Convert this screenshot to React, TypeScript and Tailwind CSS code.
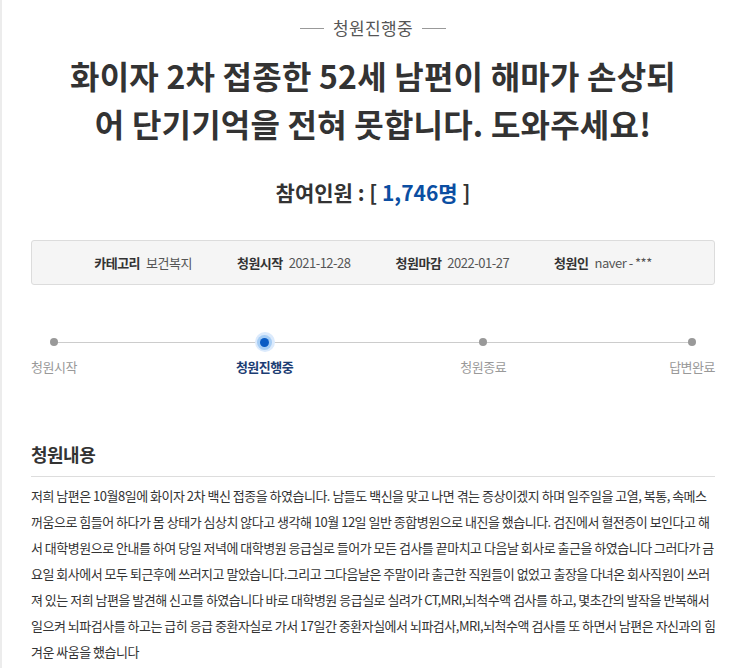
const font = { fontFamily: '"Noto Sans CJK KR", "Noto Sans", sans-serif' }

const bodyLines = [
    '저희 남편은 10월8일에 화이자 2차 백신 접종을 하였습니다. 남들도 백신을 맞고 나면 겪는 증상이겠지 하며 일주일을 고열, 복통, 속메스',
    '꺼움으로 힘들어 하다가 몸 상태가 심상치 않다고 생각해 10월 12일 일반 종합병원으로 내진을 했습니다. 검진에서 혈전증이 보인다고 해',
    '서 대학병원으로 안내를 하여 당일 저녁에 대학병원 응급실로 들어가 모든 검사를 끝마치고 다음날 회사로 출근을 하였습니다 그러다가 금',
    '요일 회사에서 모두 퇴근후에 쓰러지고 말았습니다.그리고 그다음날은 주말이라 출근한 직원들이 없었고 출장을 다녀온 회사직원이 쓰러',
    '져 있는 저희 남편을 발견해 신고를 하였습니다 바로 대학병원 응급실로 실려가 CT,MRI,뇌척수액 검사를 하고, 몇초간의 발작을 반복해서',
    '일으켜 뇌파검사를 하고는 급히 응급 중환자실로 가서 17일간 중환자실에서 뇌파검사,MRI,뇌척수액 검사를 또 하면서 남편은 자신과의 힘',
    '겨운 싸움을 했습니다',
]

const info = [
    { label: '카테고리', value: '보건복지' },
    { label: '청원시작', value: '2021-12-28' },
    { label: '청원마감', value: '2022-01-27' },
    { label: '청원인', value: 'naver - ***' },
]

const steps = ['청원시작', '청원진행중', '청원종료', '답변완료']
// small spacing tweaks so the dots land where the original ones do
const stepMargins = ['', 'mr-[8px]', 'mr-[4px]', '']

function Step({ label, active, className }: { label: string; active?: boolean; className?: string }) {
    return (
        <div className={`relative z-10 flex flex-col items-center ${className ?? ''}`}>
            <div className="flex h-[20px] w-[20px] items-center justify-center">
                {active ? (
                    <div className="flex h-[20px] w-[20px] items-center justify-center rounded-full bg-[#dbeafc]">
                        <div className="h-[9px] w-[9px] rounded-full bg-[#0a5bc4] ring-[3px] ring-[#a6cdf5]" />
                    </div>
                ) : (
                    <div className="h-[8px] w-[8px] rounded-full bg-[#999]" />
                )}
            </div>
            <div
                className={
                    active
                        ? 'mt-[5px] text-[13px] font-bold leading-[20px] tracking-[-0.5px] text-[#1c3d73]'
                        : 'mt-[5px] text-[13px] leading-[20px] tracking-[-0.5px] text-[#999]'
                }
            >
                {label}
            </div>
        </div>
    )
}

export default function App() {
    return (
        <div
            className="h-[668px] w-[745px] overflow-hidden border-l-2 border-[#ececec] bg-white pl-[29px] pr-[30px]"
            style={font}
        >
            {/* status label */}
            <div className="flex items-center justify-center gap-[9px] pt-[16px]">
                <span className="h-px w-[24px] bg-[#999]" />
                <span className="text-[17px] leading-[24px] tracking-[0.4px] text-[#555]">청원진행중</span>
                <span className="h-px w-[24px] bg-[#999]" />
            </div>

            <h1 className="mt-[11px] text-center text-[32px] font-bold leading-[48px] tracking-[0.2px] text-[#333]">
                화이자 2차 접종한 52세 남편이 해마가 손상되
                <br />
                어 단기기억을 전혀 못합니다. 도와주세요!
            </h1>

            <div className="mt-[30px] text-center text-[21px] font-bold leading-[30px] text-[#333]">
                참여인원 : [ <span className="text-[#0b4ea2]">1,746명</span> ]
            </div>

            <div className="mt-[33px] flex h-[45px] items-center justify-center gap-[45px] rounded-[3px] border border-[#dcdcdc] bg-[#f5f5f5] text-[13px] tracking-[-0.5px]">
                {info.map((item) => (
                    <div key={item.label} className="flex items-center gap-[6px]">
                        <span className="font-bold text-[#333]">{item.label}</span>
                        <span className="text-[#555]">{item.value}</span>
                    </div>
                ))}
            </div>

            {/* progress */}
            <div className="relative mt-[47px] flex justify-between">
                <div className="absolute left-[21px] right-[21px] top-[10px] h-px bg-[#ccc]" />
                {steps.map((s, i) => (
                    <Step key={s} label={s} active={i === 1} className={stepMargins[i]} />
                ))}
            </div>

            <h2 className="mt-[64px] text-[18px] font-bold leading-[26px] tracking-[-0.5px] text-[#333]">청원내용</h2>
            <div className="mt-[9px] h-px bg-[#ddd]" />

            <div className="mt-[6px] text-[13px] leading-[26px] tracking-[-0.5px] text-[#333]">
                {bodyLines.map((line, i) => (
                    <div key={i} className="whitespace-nowrap">
                        {line}
                    </div>
                ))}
            </div>
        </div>
    )
}
